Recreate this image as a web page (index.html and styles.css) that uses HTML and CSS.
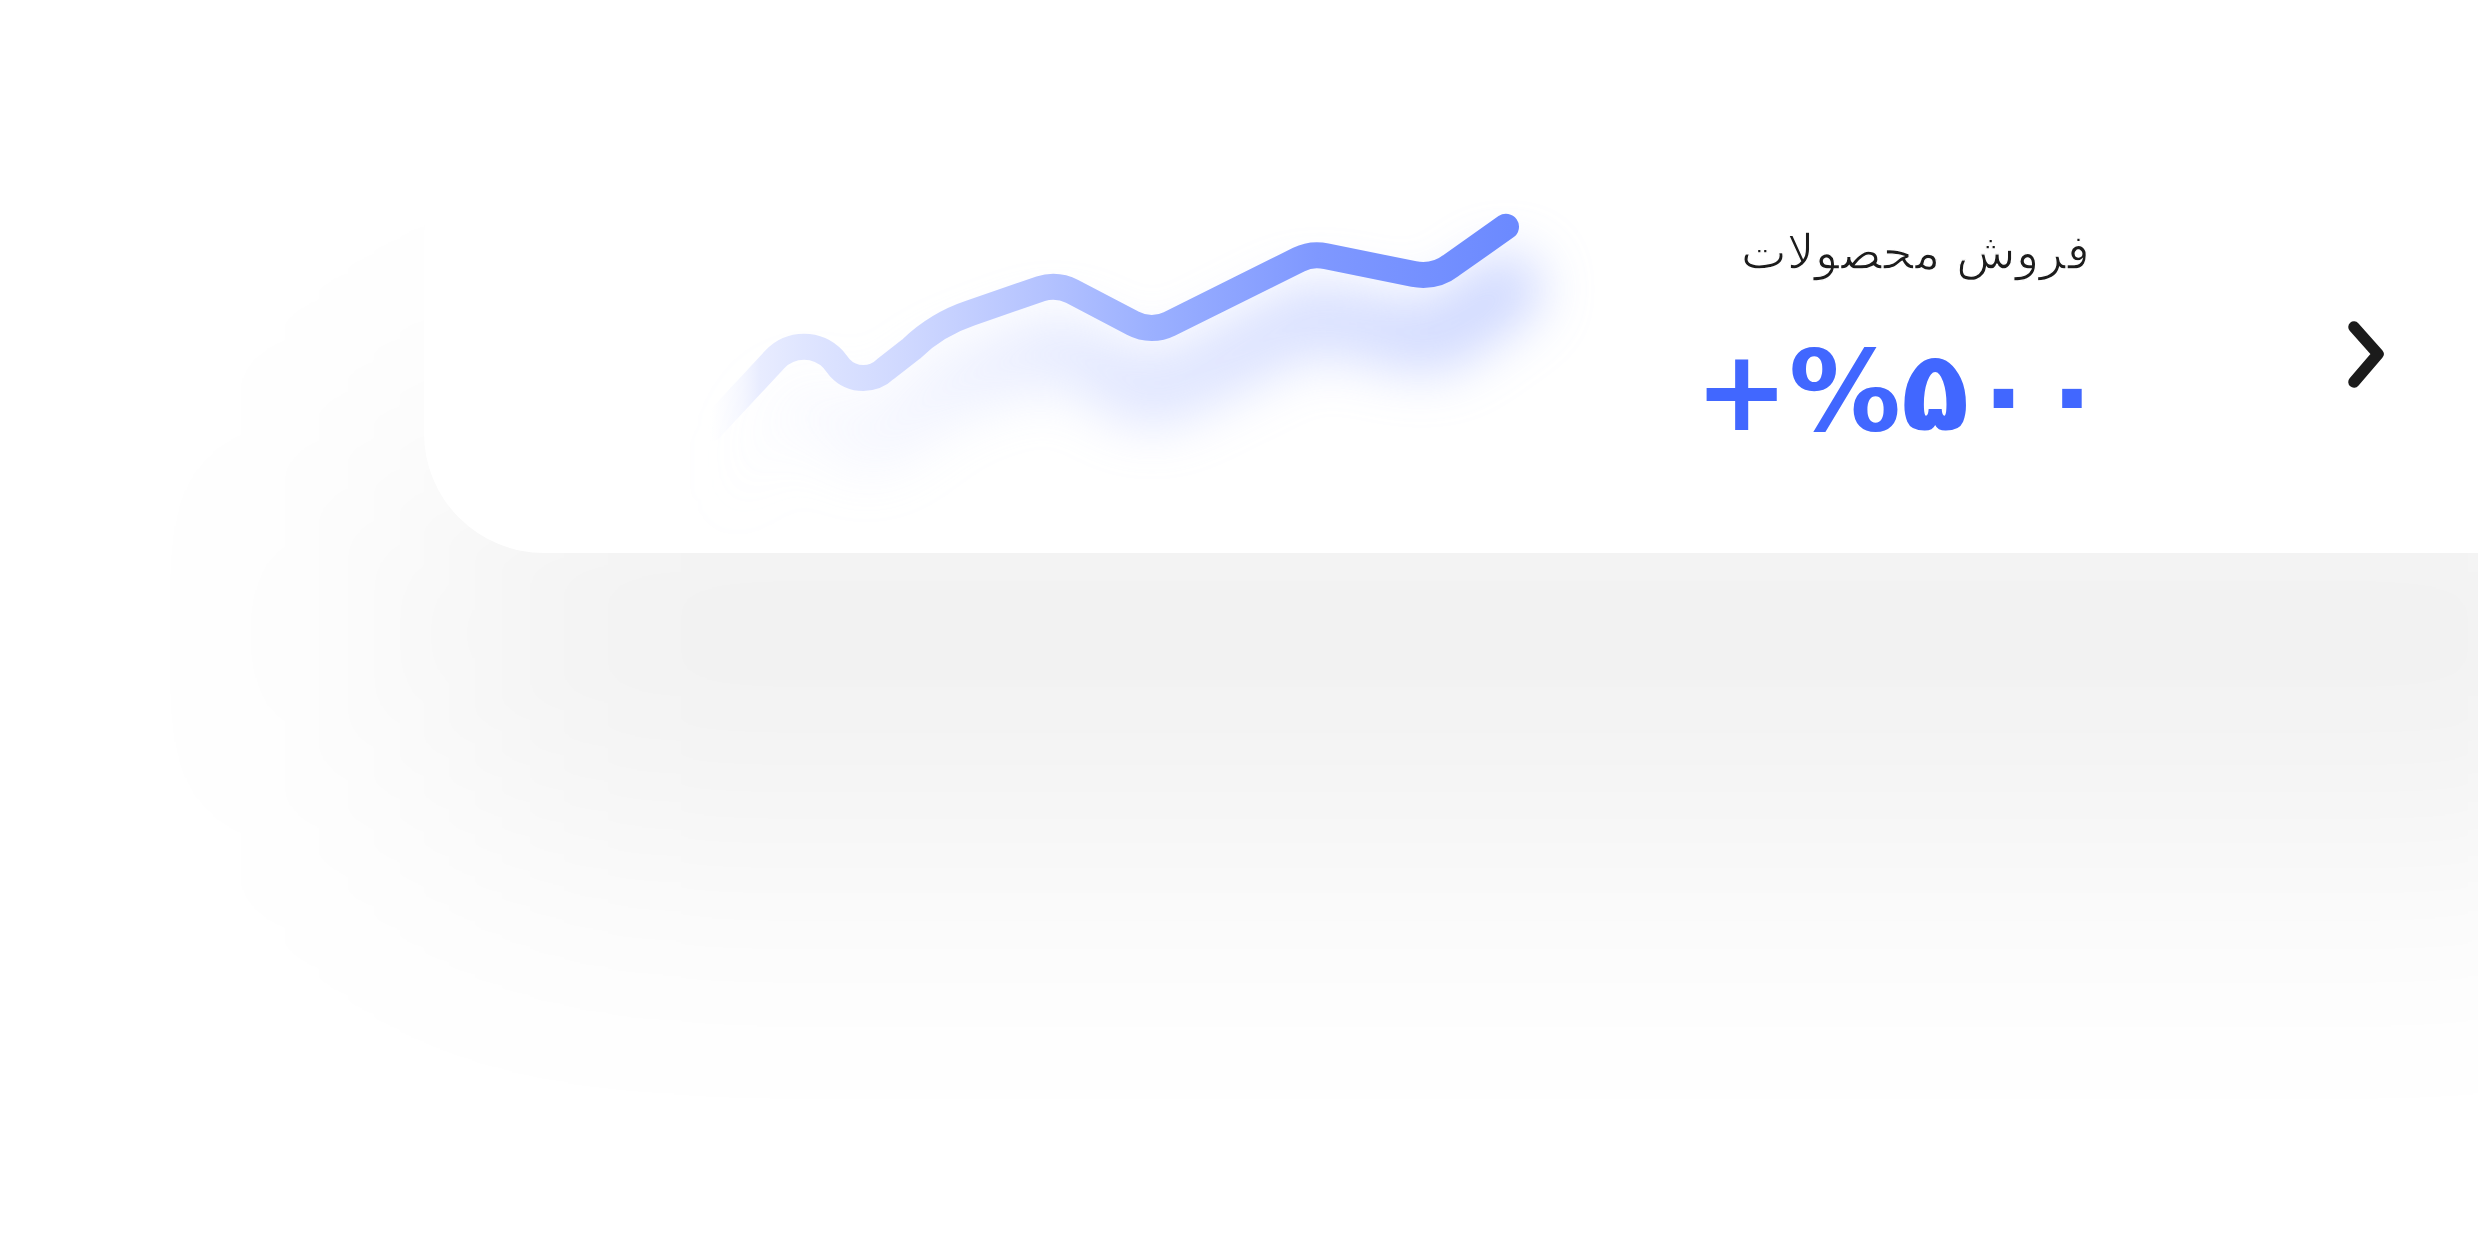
FILE: index.html
```html
<!DOCTYPE html>
<html lang="fa">
<head>
<meta charset="utf-8">
<title>فروش محصولات</title>
<link rel="stylesheet" href="styles.css">
</head>
<body>
<main class="stage">
  <section class="card">
    <svg class="chart" width="920" height="433" viewBox="0 0 920 433" aria-hidden="true">
      <defs>
        <linearGradient id="lineGrad" gradientUnits="userSpaceOnUse" x1="30" y1="0" x2="830" y2="0">
          <stop offset="0" stop-color="#f3f5ff" stop-opacity="0"/>
          <stop offset="0.04" stop-color="#eef1ff" stop-opacity="0.6"/>
          <stop offset="0.0625" stop-color="#e8ecff"/>
          <stop offset="0.1175" stop-color="#dfe5ff"/>
          <stop offset="0.245" stop-color="#cfd8ff"/>
          <stop offset="0.429" stop-color="#b2c1ff"/>
          <stop offset="0.5525" stop-color="#9bb0ff"/>
          <stop offset="0.759" stop-color="#7f98ff"/>
          <stop offset="1" stop-color="#6c8aff"/>
        </linearGradient>
        <linearGradient id="glowGrad" gradientUnits="userSpaceOnUse" x1="30" y1="0" x2="830" y2="0">
          <stop offset="0" stop-color="#dfe5ff" stop-opacity="0"/>
          <stop offset="0.5" stop-color="#c4cfff" stop-opacity="0.8"/>
          <stop offset="1" stop-color="#aebeff"/>
        </linearGradient>
        <filter id="blur" x="-20%" y="-50%" width="140%" height="200%">
          <feGaussianBlur stdDeviation="26"/>
        </filter>
        <path id="trend" d="M 30 309 L 94.8 239.4 A 40 40 0 0 1 124 226.7 A 40 40 0 0 1 153.2 239.4 L 159.9 247.8 A 32 32 0 0 0 183.3 258 A 32 32 0 0 0 205.5 249 L 231.8 228.5 Q 257 204.3 290.2 193.2 L 360.7 168.7 A 40 40 0 0 1 373.3 166.7 A 40 40 0 0 1 392.1 171.4 L 452.9 203.3 A 40 40 0 0 0 471.7 208 A 40 40 0 0 0 489.5 203.8 L 618.9 139.5 A 40 40 0 0 1 636.7 135.3 A 50 50 0 0 1 646.2 136.2 L 733.8 154.1 A 50 50 0 0 0 743.3 155 A 45 45 0 0 0 771 145.5 L 826 106.7"/>
      </defs>
      <use href="#trend" class="glow" transform="translate(0 62)" filter="url(#blur)" stroke="url(#glowGrad)"/>
      <use href="#trend" class="line" stroke="url(#lineGrad)"/>
    </svg>
    <div class="stat" dir="rtl">
      <h2 class="stat-title">فروش محصولات</h2>
      <p class="stat-value" dir="ltr">+%۵۰۰</p>
    </div>
    <button class="next" type="button" aria-label="بعدی">
      <svg width="48" height="72" viewBox="0 0 48 72" aria-hidden="true">
        <path d="M10 9 L34 36 L10 64" fill="none" stroke="#1b1b1b" stroke-width="11.5" stroke-linecap="round" stroke-linejoin="round"/>
      </svg>
    </button>
  </section>
</main>
</body>
</html>
```
FILE: styles.css
```css
html {
  background: #ffffff;
}

html, body {
  margin: 0;
  height: 100%;
  overflow: hidden;
}

.stage {
  padding: 120px 0 0 424px;
}

.card {
  position: relative;
  display: flex;
  align-items: flex-start;
  width: 2300px;
  height: 433px;
  background: #ffffff;
  border-radius: 120px;
}

/* soft drop shadow under the card */
.card::before {
  content: "";
  position: absolute;
  left: 0;
  right: 0;
  top: 304px;
  height: 420px;
  border-radius: 120px;
  background: rgba(0, 0, 0, 0.058);
  filter: blur(148px);
  z-index: -1;
}

.chart {
  flex-shrink: 0;
  margin-left: 256px;
  overflow: visible;
}

.chart .line,
.chart .glow {
  fill: none;
  stroke-linecap: round;
  stroke-linejoin: round;
}

.chart .line {
  stroke-width: 26;
}

.chart .glow {
  stroke-width: 72;
  opacity: 0.6;
}

.stat {
  flex-shrink: 0;
  width: 420px;
  margin-left: 70px;
  margin-top: 103px;
  display: flex;
  flex-direction: column;
  align-items: flex-start;
  font-family: "DejaVu Sans", sans-serif;
}

.stat-title {
  margin: 0;
  font-size: 49px;
  line-height: 60px;
  font-weight: 400;
  color: #1c1c1c;
  -webkit-text-stroke: 1.3px #ffffff;
}

.stat-value {
  margin: 48px -16px 0 0;
  font-size: 112px;
  line-height: 120px;
  font-weight: 700;
  letter-spacing: -4px;
  color: #4167ff;
  unicode-bidi: isolate;
}

.next {
  flex-shrink: 0;
  margin-left: 254px;
  margin-top: 198px;
  width: 48px;
  height: 72px;
  padding: 0;
  border: 0;
  background: none;
}

.next svg {
  display: block;
}
```
